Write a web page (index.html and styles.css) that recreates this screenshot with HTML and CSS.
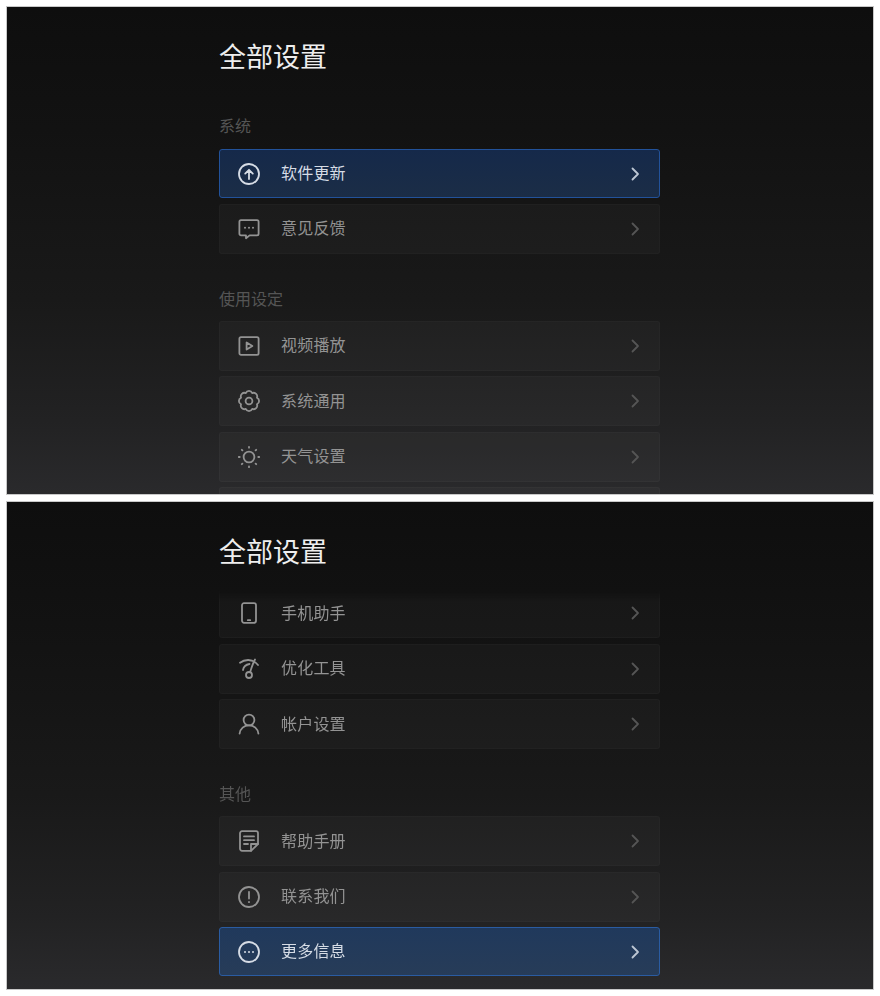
FILE: index.html
```html
<!DOCTYPE html>
<html lang="zh-CN">
<head>
<meta charset="utf-8">
<title>全部设置</title>
<link rel="stylesheet" href="styles.css">
</head>
<body>
<svg class="defs" width="0" height="0" aria-hidden="true">
  <symbol id="chev" viewBox="0 0 10 16"><path d="M2.500 2.500l5.500 5.500-5.500 5.500"/></symbol>
  <symbol id="i-up" viewBox="0 0 24 24"><circle cx="12" cy="12" r="10"/><path d="M12 17V8M8.200 11.600L12 7.800l3.800 3.800"/></symbol>
  <symbol id="i-chat" viewBox="0 0 24 24"><path d="M4 3.200h16a1.600 1.600 0 0 1 1.600 1.600v12a1.600 1.600 0 0 1-1.600 1.600h-7.400l-3.600 2.800v-2.800H4a1.600 1.600 0 0 1-1.600-1.600v-12A1.600 1.600 0 0 1 4 3.200z"/><path class="dots" d="M8 10.800h.01M12 10.800h.01M16 10.800h.01"/></symbol>
  <symbol id="i-play" viewBox="0 0 24 24"><rect x="2.400" y="3.200" width="19.200" height="17.600" rx="1.600"/><path d="M9.600 8.400v7.200l5.800-3.600z"/></symbol>
  <symbol id="i-gear" viewBox="0 0 24 24"><path d="M19.950 8.710A3.600 3.600 0 0 1 19.950 15.290A3.600 3.600 0 0 1 15.290 19.950A3.600 3.600 0 0 1 8.710 19.950A3.600 3.600 0 0 1 4.050 15.290A3.600 3.600 0 0 1 4.050 8.710A3.600 3.600 0 0 1 8.710 4.050A3.600 3.600 0 0 1 15.290 4.050A3.600 3.600 0 0 1 19.950 8.710z"/><circle cx="12" cy="12" r="3.400"/></symbol>
  <symbol id="i-sun" viewBox="0 0 24 24"><circle cx="12" cy="12" r="5.400"/><path class="rays" d="M12 1.800v.9M12 21.300v.9M1.800 12h.9M21.300 12h.9M4.800 4.800l.6.6M18.600 18.600l.6.6M4.800 19.200l.6-.6M18.600 5.400l.6-.6"/></symbol>
  <symbol id="i-phone" viewBox="0 0 24 24"><rect x="5" y="2.200" width="14" height="19.600" rx="2"/><path d="M10.800 19.200h2.400"/></symbol>
  <symbol id="i-tool" viewBox="0 0 24 24"><path d="M3 5.800C7 2.600 15 .8 21 8"/><path d="M6 13C6.500 10 9 7.600 12.500 7"/><path d="M18 2.500C16 6 14.500 11 13 15.200"/><circle cx="12" cy="18" r="3"/></symbol>
  <symbol id="i-user" viewBox="0 0 24 24"><circle cx="12" cy="8" r="5.400"/><path d="M2.600 21.600c.5-5 4.500-8.200 9.400-8.200s8.900 3.200 9.400 8.200"/></symbol>
  <symbol id="i-doc" viewBox="0 0 24 24"><path d="M14 21.800H5a2 2 0 0 1-2-2V4.200a2 2 0 0 1 2-2h14a2 2 0 0 1 2 2V15z"/><path d="M14 21.800V15h7"/><path d="M7 7.400h10M7 11.200h10M7 15h4"/></symbol>
  <symbol id="i-info" viewBox="0 0 24 24"><circle cx="12" cy="12" r="10"/><path d="M12 6.800v6.800M12 16.800v.4"/></symbol>
  <symbol id="i-more" viewBox="0 0 24 24"><circle cx="12" cy="12" r="10"/><path class="dots" d="M8 12h.01M12 12h.01M16 12h.01"/></symbol>
</svg>

<main class="screens">
  <section class="panel">
    <div class="column">
      <h1 class="title">全部设置</h1>
      <h2 class="group group-first">系统</h2>
      <ul class="rows">
        <li class="row row-active"><svg class="icon"><use href="#i-up"/></svg><span class="label">软件更新</span><svg class="chev"><use href="#chev"/></svg></li>
        <li class="row"><svg class="icon"><use href="#i-chat"/></svg><span class="label">意见反馈</span><svg class="chev"><use href="#chev"/></svg></li>
      </ul>
      <h2 class="group">使用设定</h2>
      <ul class="rows">
        <li class="row"><svg class="icon"><use href="#i-play"/></svg><span class="label">视频播放</span><svg class="chev"><use href="#chev"/></svg></li>
        <li class="row"><svg class="icon"><use href="#i-gear"/></svg><span class="label">系统通用</span><svg class="chev"><use href="#chev"/></svg></li>
        <li class="row"><svg class="icon"><use href="#i-sun"/></svg><span class="label">天气设置</span><svg class="chev"><use href="#chev"/></svg></li>
        <li class="row"></li>
      </ul>
    </div>
  </section>

  <section class="panel">
    <div class="column">
      <h1 class="title">全部设置</h1>
      <div class="scroller">
        <ul class="rows rows-scrolled">
          <li class="row"><svg class="icon"><use href="#i-phone"/></svg><span class="label">手机助手</span><svg class="chev"><use href="#chev"/></svg></li>
          <li class="row"><svg class="icon"><use href="#i-tool"/></svg><span class="label">优化工具</span><svg class="chev"><use href="#chev"/></svg></li>
          <li class="row"><svg class="icon"><use href="#i-user"/></svg><span class="label">帐户设置</span><svg class="chev"><use href="#chev"/></svg></li>
        </ul>
        <h2 class="group">其他</h2>
        <ul class="rows">
          <li class="row"><svg class="icon"><use href="#i-doc"/></svg><span class="label">帮助手册</span><svg class="chev"><use href="#chev"/></svg></li>
          <li class="row"><svg class="icon"><use href="#i-info"/></svg><span class="label">联系我们</span><svg class="chev"><use href="#chev"/></svg></li>
          <li class="row row-active row-active-light"><svg class="icon"><use href="#i-more"/></svg><span class="label">更多信息</span><svg class="chev"><use href="#chev"/></svg></li>
        </ul>
      </div>
    </div>
  </section>
</main>
</body>
</html>
```

FILE: styles.css
```css
* { box-sizing: border-box; }

html, body { margin: 0; background: #fff; }

body {
  width: 880px;
  height: 996px;
  overflow: hidden;
  font-family: "Noto Sans CJK SC", "Noto Sans", sans-serif;
}

.defs { position: absolute; }

.screens {
  display: flex;
  flex-direction: column;
  gap: 8px;
  padding: 7px;
}

.panel {
  height: 487px;
  overflow: hidden;
  background: linear-gradient(180deg, #0e0e0e 0%, #121212 25%, #191919 60%, #222223 85%, #2a2a2c 100%);
  box-shadow: 0 0 0 1px #c8c8c8;
}

.column {
  width: 441px;
  margin-left: 212px;
  padding-top: 29px;
}

.title {
  margin: 0;
  font-size: 27px;
  line-height: 40px;
  font-weight: 400;
  color: #eee;
}

.group {
  margin: 32px 0 11px;
  font-size: 16px;
  line-height: 24px;
  font-weight: 400;
  color: #555;
}

.group-first {
  margin-top: 37px;
  margin-bottom: 12px;
}

.rows {
  display: flex;
  flex-direction: column;
  gap: 5.5px;
  margin: 0;
  padding: 0;
  list-style: none;
}

.scroller {
  height: 401px;
  margin-top: 19px;
  overflow: hidden;
  -webkit-mask-image: linear-gradient(180deg, transparent 0, #000 12px);
  mask-image: linear-gradient(180deg, transparent 0, #000 12px);
}

.rows-scrolled { margin-top: -2px; }

.row {
  display: flex;
  align-items: center;
  flex: none;
  height: 50px;
  padding: 0 19px 0 17px;
  border: 1px solid rgba(255, 255, 255, 0.022);
  border-radius: 3px;
  background: rgba(255, 255, 255, 0.028);
  color: #939393;
}

.row-active {
  height: 49px;
  border-color: #22529a;
  background: linear-gradient(180deg, #15294a 0%, #1b2d46 100%);
  color: #d6dce5;
}

.row-active-light {
  background: linear-gradient(180deg, #20395c 0%, #273c58 100%);
  border-color: #2a5ca2;
}

.icon {
  flex: none;
  width: 24px;
  height: 24px;
  fill: none;
  stroke: currentColor;
  stroke-width: 1.8;
  stroke-linecap: round;
  stroke-linejoin: round;
}

.dots { stroke-width: 2; }

.label {
  flex: 1;
  margin-left: 20px;
  margin-bottom: 3px;
  font-size: 16px;
  line-height: 24px;
  letter-spacing: 0.2px;
}

.chev {
  flex: none;
  width: 10px;
  height: 16px;
  fill: none;
  stroke: #555;
  stroke-width: 1.8;
  stroke-linecap: round;
  stroke-linejoin: round;
}

.row-active .chev { stroke: #bcc6d3; }
```
